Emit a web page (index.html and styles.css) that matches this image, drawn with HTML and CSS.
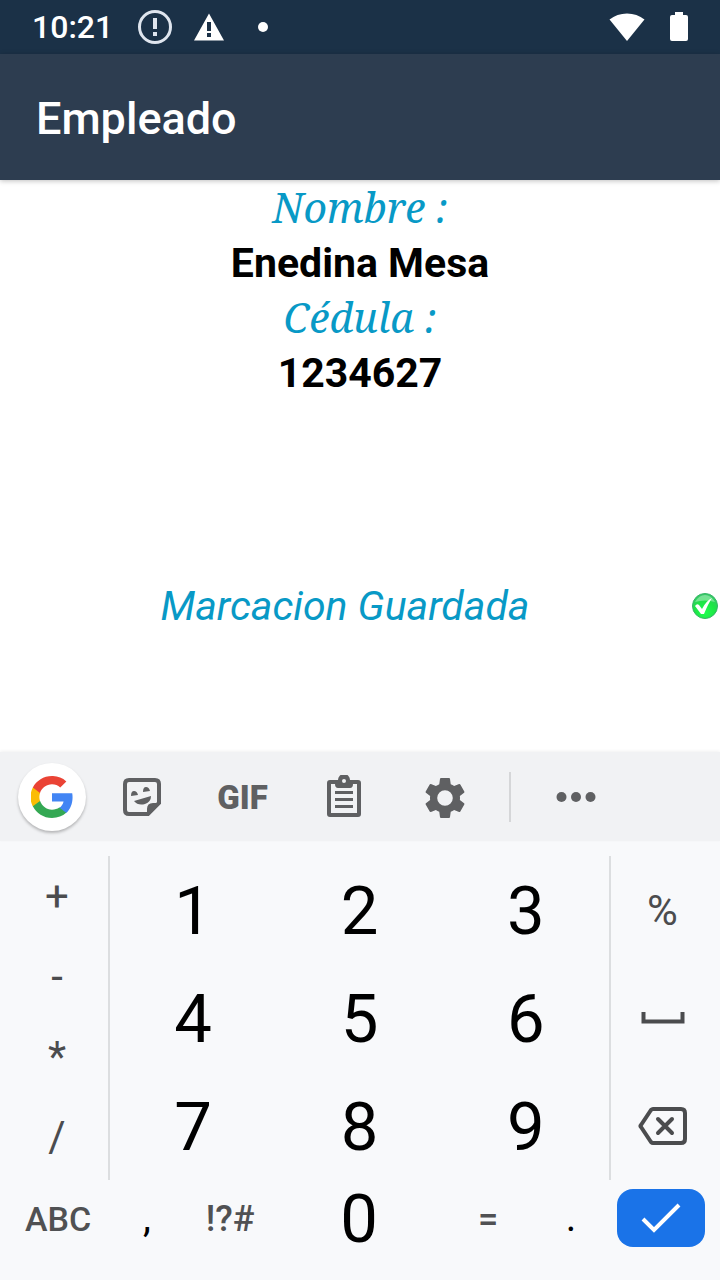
FILE: index.html
```html
<!DOCTYPE html>
<html lang="es">
<head>
<meta charset="utf-8">
<meta name="viewport" content="width=device-width, initial-scale=1">
<title>Empleado</title>
<link rel="stylesheet" href="styles.css">
</head>
<body>
<div class="status-bar">
  <time class="clock">10:21</time>
  <svg class="status-icon alert" width="36" height="36" viewBox="0 0 36 36" aria-hidden="true"><circle cx="18" cy="18" r="15.5" fill="none" stroke="#dfe5ee" stroke-width="3"/><path d="M16 9h4v11h-4zM16 23h4v4h-4z" fill="#dfe5ee"/></svg>
  <svg class="status-icon warning" width="32" height="28" viewBox="0 0 32 28" aria-hidden="true"><path fill="#fff" fill-rule="evenodd" d="M16 .5 31 27.500H1zM14 9v9h4V9zM14 20v4h4v-4z"/></svg>
  <span class="more-dot"></span>
  <svg class="wifi" width="36" height="28" viewBox="0 0 36 28" aria-hidden="true"><path fill="#fff" d="M.5 6.500Q8 .5 18 .5t17.500 6L18 28z"/></svg>
  <svg class="battery" width="18" height="30" viewBox="0 0 18 30" aria-hidden="true"><path fill="#fff" d="M5 0h8v3h3q2 0 2 2v22q0 2-2 2H2q-2 0-2-2V5q0-2 2-2h3z"/></svg>
</div>
<header class="app-bar"><h1 class="app-title">Empleado</h1></header>
<main class="content">
  <dl class="employee">
    <dt class="label">Nombre :</dt>
    <dd class="value">Enedina Mesa</dd>
    <dt class="label">Cédula :</dt>
    <dd class="value">1234627</dd>
  </dl>
  <div class="result">
    <p class="message">Marcacion Guardada</p>
    <svg class="saved" width="30" height="28" viewBox="0 0 30 28" aria-hidden="true">
      <defs><radialGradient id="green" cx=".5" cy=".75" r=".7"><stop offset="0" stop-color="#1dff4e"/><stop offset=".6" stop-color="#1ee446"/><stop offset="1" stop-color="#35c966"/></radialGradient></defs>
      <circle cx="15" cy="13" r="12.500" fill="url(#green)" stroke="#35b465"/>
      <path d="M5 9Q9 2 15 2t10 7Q15 6 5 9z" fill="#fff" opacity=".35"/>
      <path d="M5 13q2-3 4-1l3 4q4-8 10-11-4 6-8 16h-3z" fill="#fff"/>
    </svg>
  </div>
</main>
<section class="keyboard" aria-label="Teclado">
  <div class="toolbar">
    <button class="google" aria-label="Google"><svg width="42" height="42" viewBox="0 0 48 48"><path fill="#4285f4" d="M47.500 24.500c0-1.600-.1-3.200-.4-4.700H24v9.300h13.200c-.6 3-2.300 5.600-4.900 7.300v6h7.900c4.600-4.300 7.300-10.600 7.300-17.900z"/><path fill="#34a853" d="M24 48c6.600 0 12.200-2.200 16.200-5.900l-7.900-6c-2.200 1.500-5 2.400-8.300 2.400-6.400 0-11.800-4.300-13.700-10.100H2.100v6.200C6.100 42.600 14.400 48 24 48z"/><path fill="#fbbc04" d="M10.300 28.500a14.500 14.500 0 0 1 0-9.200v-6.200H2.100a24 24 0 0 0 0 21.600z"/><path fill="#ea4335" d="M24 9.500c3.600 0 6.800 1.200 9.400 3.700l7-7A23.500 23.500 0 0 0 24 0C14.400 0 6.100 5.400 2.100 13.200l8.200 6.200C12.200 13.700 17.600 9.500 24 9.500z"/></svg></button>
    <button class="tool" aria-label="Stickers"><svg width="38" height="38" viewBox="0 0 38 38"><path d="M6 2h26q4 0 4 4v19L25 36H6q-4 0-4-4V6q0-4 4-4z" fill="none" stroke="#5f6062" stroke-width="4"/><path fill="#5f6062" d="M24 37v-6q0-6 6-6h7L26 37zM8 18q0-5 3-5t4 4zM20 14q0-5 3-5t4 4zM11 23l17-5q0 6-6 8-7 2-11-3z"/></svg></button>
    <button class="tool gif">GIF</button>
    <button class="tool" aria-label="Portapapeles"><svg width="36" height="44" viewBox="0 0 36 44"><path fill="#5f6062" fill-rule="evenodd" d="M4 5h8a6 6 0 0 1 12 0h8q3 0 3 3v31q0 3-3 3H4q-3 0-3-3V8q0-3 3-3zM5 9v29h26V9h-4q0 4-3 4H12q-3 0-3-4zM18 4a2 2 0 1 0 0 4 2 2 0 0 0 0-4z"/><path stroke="#5f6062" stroke-width="3" d="M9 17.500h18M9 24.500h18M9 31.500h18"/></svg></button>
    <button class="tool settings" aria-label="Ajustes"><svg width="48" height="48" viewBox="0 0 24 24"><path fill="#5f6062" d="M19.430 12.980c.04-.32.070-.64.070-.98s-.03-.66-.07-.98l2.110-1.650c.19-.15.240-.42.120-.64l-2-3.460c-.12-.22-.39-.3-.61-.22l-2.490 1c-.52-.4-1.080-.73-1.690-.98l-.38-2.650A.488.488 0 0 0 14 2h-4c-.25 0-.46.180-.49.420l-.38 2.650c-.61.250-1.170.590-1.690.98l-2.490-1c-.23-.09-.49 0-.61.220l-2 3.460c-.13.220-.07.490.12.640l2.110 1.650c-.04.320-.07.650-.07.980s.03.660.070.98l-2.110 1.650c-.19.150-.24.420-.12.640l2 3.460c.12.220.39.300.61.220l2.490-1c.52.400 1.080.730 1.690.98l.38 2.650c.03.240.24.420.49.420h4c.25 0 .46-.18.490-.42l.38-2.650c.61-.25 1.170-.59 1.690-.98l2.490 1c.23.090.49 0 .61-.22l2-3.460c.12-.22.070-.49-.12-.64zM12 15.900a3.900 3.900 0 1 1 0-7.800 3.900 3.900 0 0 1 0 7.800z"/></svg></button>
    <span class="divider"></span>
    <button class="tool" aria-label="Más"><svg width="40" height="10" viewBox="0 0 40 10"><g fill="#5f6062"><circle cx="5.500" cy="5" r="5"/><circle cx="20" cy="5" r="5"/><circle cx="34.500" cy="5" r="5"/></g></svg></button>
  </div>
  <div class="pad">
    <div class="operators">
      <button class="key symbol">+</button>
      <button class="key symbol">-</button>
      <button class="key symbol">*</button>
      <button class="key symbol">/</button>
    </div>
    <div class="digits">
      <button class="key digit">1</button><button class="key digit">2</button><button class="key digit">3</button>
      <button class="key digit">4</button><button class="key digit">5</button><button class="key digit">6</button>
      <button class="key digit">7</button><button class="key digit">8</button><button class="key digit">9</button>
    </div>
    <div class="actions">
      <button class="key symbol">%</button>
      <button class="key" aria-label="Espacio"><svg width="44" height="12" viewBox="0 0 44 12"><path d="M2.500 0v9.500h39V0" fill="none" stroke="#4b4c4e" stroke-width="4"/></svg></button>
      <button class="key" aria-label="Borrar"><svg width="50" height="40" viewBox="0 0 50 40"><path d="M15 3h28q4 0 4 4v26q0 4-4 4H15q-1 0-2-1L3 21q-1-1 0-2L13 4q1-1 2-1z" fill="none" stroke="#4b4c4e" stroke-width="4"/><path d="M20 13l14 14M34 13 20 27" stroke="#4b4c4e" stroke-width="4" stroke-linecap="round"/></svg></button>
    </div>
  </div>
  <div class="bottom-row">
    <button class="key abc">ABC</button>
    <button class="key mark">,</button>
    <button class="key special">!?#</button>
    <button class="key digit">0</button>
    <button class="key special">=</button>
    <button class="key mark">.</button>
    <button class="enter" aria-label="Aceptar"><svg width="40" height="32" viewBox="0 0 40 32"><path d="M2 17l11 11L38 3" fill="none" stroke="#fff" stroke-width="4"/></svg></button>
  </div>
</section>
</body>
</html>
```

FILE: styles.css
```css
* { box-sizing: border-box; }

body {
  margin: 0;
  min-height: 100vh;
  display: flex;
  flex-direction: column;
  background: #fff;
  font-family: Roboto, sans-serif;
}

button {
  border: 0;
  padding: 0;
  background: none;
  font-family: inherit;
  display: flex;
  align-items: center;
  justify-content: center;
}

.status-bar {
  height: 54px;
  padding: 0 32px;
  display: flex;
  align-items: center;
  background: #1b3147;
  color: #fff;
}
.clock { font-size: 32px; line-height: 54px; font-weight: 500; }
.alert { margin-left: 24px; }
.warning { margin-left: 20px; }
.more-dot {
  width: 10px;
  height: 10px;
  margin-left: 33px;
  border-radius: 50%;
  background: #fff;
}
.wifi { margin-left: auto; }
.battery { margin-left: 25px; }

.app-bar {
  height: 126px;
  padding: 0 36px;
  display: flex;
  align-items: center;
  background: #2d3d50;
  box-shadow: 0 1px 5px rgba(0, 0, 0, .25);
}
.app-title {
  margin: 0;
  padding-top: 3px;
  color: #fff;
  font-size: 45px;
  font-weight: 500;
}

.content { flex: 1; }
.employee { margin: 0; text-align: center; }
.label, .value { margin: 0; font-size: 41px; line-height: 55px; }
.label {
  color: #0899c6;
  font-family: "Noto Serif", "Droid Serif", "Liberation Serif", serif;
  font-style: italic;
}
.value { padding-top: 2px; line-height: 53px; color: #000; font-weight: 700; }
.label + .value { padding-bottom: 0; }
.result { display: flex; align-items: center; margin-top: 179px; }
.message {
  flex: 1;
  margin: 0;
  color: #0899c6;
  font-size: 41px;
  line-height: 55px;
  font-style: italic;
  text-align: center;
}

.keyboard { background: #f8f9fb; padding-bottom: 24px; }
.toolbar {
  height: 89px;
  padding: 1px 0 0 18px;
  display: flex;
  align-items: center;
  background: #f1f2f4;
  box-shadow: 0 -1px 3px rgba(0, 0, 0, .06);
}
.google {
  width: 68px;
  height: 68px;
  margin-right: 5px;
  border-radius: 50%;
  background: #fff;
  box-shadow: 0 2px 3px rgba(0, 0, 0, .25);
}
.tool { width: 101px; height: 68px; color: #5f6062; }
.gif { font-size: 33px; font-weight: 900; }
.settings { padding-top: 2px; }
.divider { width: 2px; height: 50px; margin: 0 14px; background: #d5d6d8; }

.pad {
  display: grid;
  grid-template-columns: 102fr 503fr 103fr;
  padding: 15px 6px 0;
}
.operators { display: grid; grid-template-rows: repeat(4, 80px); }
.digits {
  display: grid;
  grid-template-columns: repeat(3, 1fr);
  grid-template-rows: repeat(3, 108px);
  border: solid #dcdee0;
  border-width: 0 2px;
}
.actions { display: grid; grid-template-rows: repeat(3, 108px); }
.symbol { color: #4b4c4e; font-size: 42px; }
.digit { padding-top: 2px; color: #000; font-size: 67px; }

.bottom-row {
  display: grid;
  grid-template-columns: 104fr 74fr 92fr 166fr 92fr 74fr 106fr;
  grid-template-rows: 75px;
  align-items: center;
  padding: 0 6px 1px;
}
.abc { color: #505153; font-size: 34px; font-weight: 500; padding-top: 2px; }
.special { color: #505153; font-size: 36px; font-weight: 500; padding-top: 2px; }
.mark { color: #000; font-size: 40px; }
.enter {
  width: 88px;
  height: 58px;
  justify-self: center;
  border-radius: 16px;
  background: #1a73e8;
}
```
